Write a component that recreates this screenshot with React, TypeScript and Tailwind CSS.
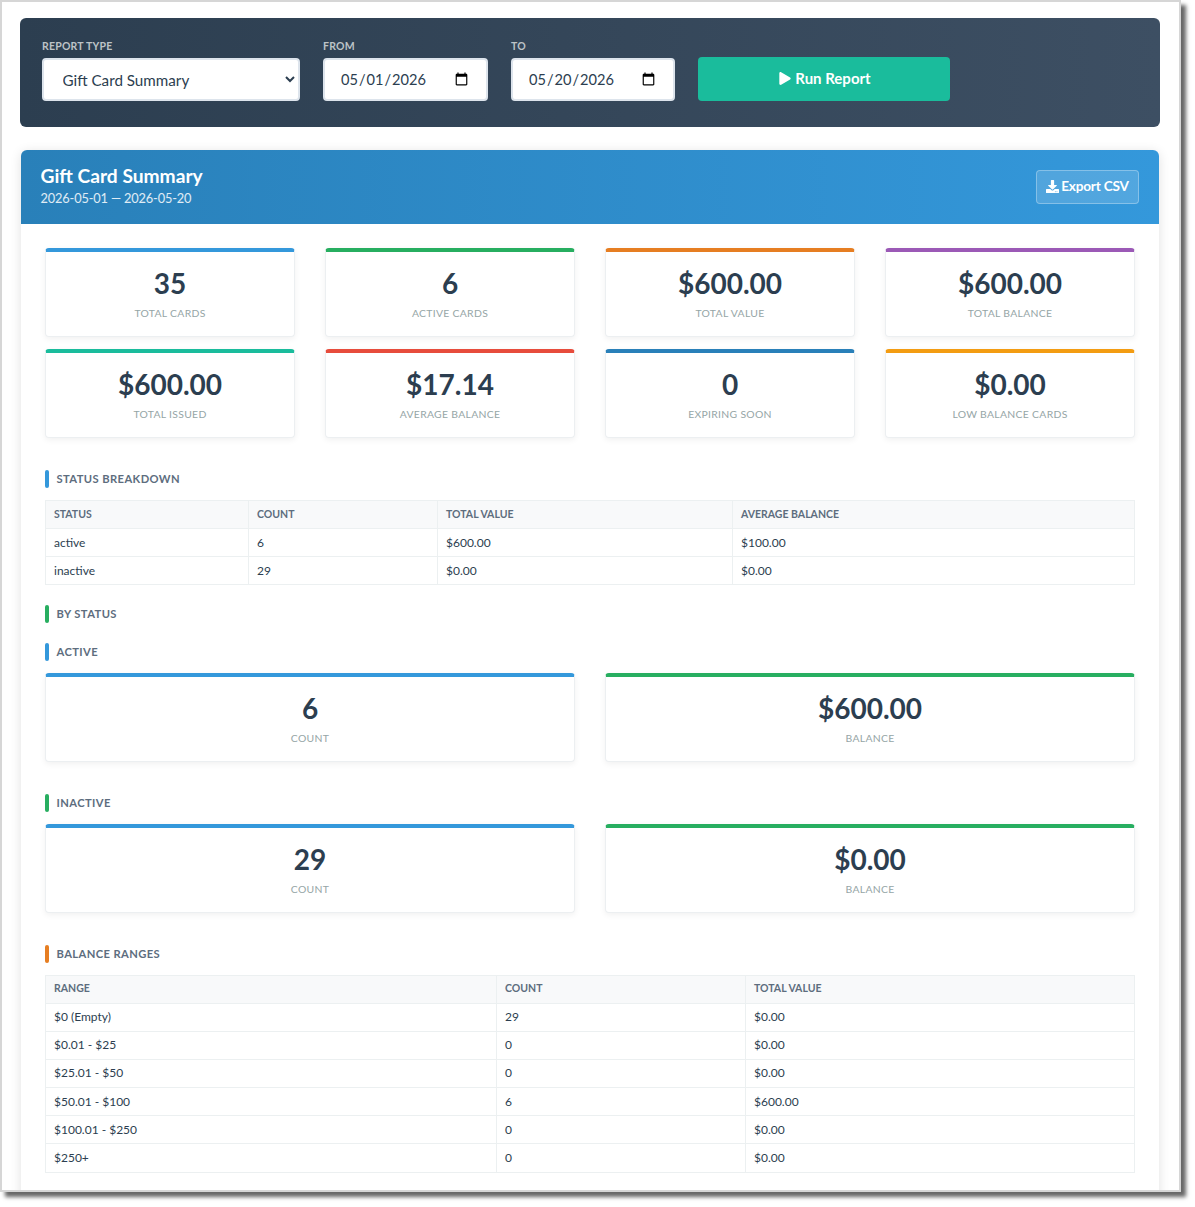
import { FaPlay, FaDownload } from "react-icons/fa";

function Stat({ value, label, color }: { value: string; label: string; color: string }) {
  return (
    <div className={`h-[89px] rounded-[4px] border border-[#eceff1] border-t-4 bg-white pt-[13px] text-center shadow-[0_2px_6px_rgba(0,0,0,0.06)] ${color}`}>
      <div className="text-[28px] font-bold leading-[36px] text-[#2c3e50]">{value}</div>
      <div className="mt-[5px] text-[10.4px] uppercase leading-[14px] tracking-[0.3px] text-[#95a5a6]">{label}</div>
    </div>
  );
}

function Title({ text, color, className }: { text: string; color: string; className: string }) {
  return (
    <div className={`flex h-[18px] items-center ${className}`}>
      <span className={`h-[18px] w-[4px] rounded-[2px] ${color}`} />
      <span className="ml-[7.5px] text-[11.2px] font-bold uppercase leading-[18px] tracking-[0.4px] text-[#5d6d7e]">{text}</span>
    </div>
  );
}

function DataTable({ widths, head, rows, rowH }: { widths: string[]; head: string[]; rows: string[][]; rowH: string }) {
  return (
    <table className="w-[1089px] table-fixed border-collapse text-[12px] text-[#2c3e50]">
      <colgroup>
        {widths.map((w) => (
          <col key={w} className={w} />
        ))}
      </colgroup>
      <thead>
        <tr className="bg-[#f8f9fa]">
          {head.map((h) => (
            <th key={h} className="h-[28px] border border-[#ecf0f1] pl-[8px] pr-[8px] text-left text-[10.5px] font-bold uppercase text-[#5d6d7e]">
              {h}
            </th>
          ))}
        </tr>
      </thead>
      <tbody>
        {rows.map((r) => (
          <tr key={r[0]} className={rowH}>
            {r.map((c, i) => (
              <td key={i} className="border border-[#ecf0f1] pl-[8px] pr-[8px]">
                {c}
              </td>
            ))}
          </tr>
        ))}
      </tbody>
    </table>
  );
}

const fieldClass =
  "h-[43px] rounded-[4px] border-2 border-[#dde4ec] bg-white text-[#2c3e50] outline-none";
const labelClass =
  "mb-[5px] text-[10.5px] font-bold uppercase leading-[14px] tracking-[0.2px] text-[#bdc3c7]";

export default function App() {
  return (
    <div className="h-[1207px] w-[1195px] bg-white font-['Lato',sans-serif]">
      <div className="h-[1192px] w-[1181px] border-2 border-[#d6d6d6] bg-white shadow-[5px_5px_4px_rgba(0,0,0,0.6)]">
        <div className="h-full overflow-hidden pl-[18px] pt-[16px] pr-[19px]">
          <div className="flex h-[109px] items-start gap-[23px] rounded-[6px] bg-gradient-to-r from-[#2c3e50] to-[#3d4f63] pl-[22px] pt-[21px]">
            <div className="w-[258px]">
              <div className={labelClass}>Report Type</div>
              <select className={`${fieldClass} w-full pl-[14.5px] text-[15.2px]`} defaultValue="Gift Card Summary">
                <option>Gift Card Summary</option>
              </select>
            </div>
            <div className="w-[165px]">
              <div className={labelClass}>From</div>
              <input type="date" defaultValue="2026-05-01" className={`${fieldClass} w-full pl-[15px] pr-[15px] text-[14.6px]`} />
            </div>
            <div className="w-[164px]">
              <div className={labelClass}>To</div>
              <input type="date" defaultValue="2026-05-20" className={`${fieldClass} w-full pl-[15px] pr-[15px] text-[14.6px]`} />
            </div>
            <button className="mt-[18px] flex h-[44px] w-[252px] items-center justify-center gap-[4px] rounded-[4px] bg-[#1abc9c] pb-[2px] pl-[2px] text-[15px] font-bold text-white">
              <FaPlay className="h-[13px] w-[12px]" />
              Run Report
            </button>
          </div>

          <div className="ml-[1px] mr-[1px] mt-[23px] h-[1100px] rounded-t-[6px] bg-white shadow-[0_2px_12px_rgba(0,0,0,0.12)]">
            <div className="flex h-[74px] items-center justify-between rounded-t-[6px] bg-gradient-to-r from-[#2980b9] to-[#3498db] pl-[19.5px] pr-[20px]">
              <div className="pb-[4px]">
                <div className="text-[19.2px] font-bold leading-[23px] text-white">Gift Card Summary</div>
                <div className="mt-[3px] text-[12.8px] leading-[17px] tracking-[-0.16px] text-white/85">2026-05-01 — 2026-05-20</div>
              </div>
              <button className="flex h-[34px] w-[103px] items-center justify-center gap-[2px] rounded-[4px] border border-white/30 bg-white/15 pb-[2px] text-[13.6px] font-bold tracking-[-0.2px] text-white">
                <FaDownload className="h-[13px] w-[13px]" />
                Export CSV
              </button>
            </div>

            <div className="px-[24px] pt-[24px]">
              <div className="grid grid-cols-4 gap-x-[30px] gap-y-[12px]">
                <Stat value="35" label="Total Cards" color="border-t-[#3498db]" />
                <Stat value="6" label="Active Cards" color="border-t-[#27ae60]" />
                <Stat value="$600.00" label="Total Value" color="border-t-[#e67e22]" />
                <Stat value="$600.00" label="Total Balance" color="border-t-[#9b59b6]" />
                <Stat value="$600.00" label="Total Issued" color="border-t-[#1abc9c]" />
                <Stat value="$17.14" label="Average Balance" color="border-t-[#e74c3c]" />
                <Stat value="0" label="Expiring Soon" color="border-t-[#2980b9]" />
                <Stat value="$0.00" label="Low Balance Cards" color="border-t-[#f39c12]" />
              </div>

              <Title text="Status Breakdown" color="bg-[#3498db]" className="mt-[32px] mb-[12px]" />
              <DataTable
                widths={["w-[203px]", "w-[189px]", "w-[295px]", "w-[402px]"]}
                head={["Status", "Count", "Total Value", "Average Balance"]}
                rowH="h-[28px]"
                rows={[
                  ["active", "6", "$600.00", "$100.00"],
                  ["inactive", "29", "$0.00", "$0.00"],
                ]}
              />

              <Title text="By Status" color="bg-[#27ae60]" className="mt-[20px] mb-[20px]" />
              <Title text="Active" color="bg-[#3498db]" className="mb-[12px]" />
              <div className="grid grid-cols-2 gap-x-[30px]">
                <Stat value="6" label="Count" color="border-t-[#3498db]" />
                <Stat value="$600.00" label="Balance" color="border-t-[#27ae60]" />
              </div>

              <Title text="Inactive" color="bg-[#27ae60]" className="mt-[32px] mb-[12px]" />
              <div className="grid grid-cols-2 gap-x-[30px]">
                <Stat value="29" label="Count" color="border-t-[#3498db]" />
                <Stat value="$0.00" label="Balance" color="border-t-[#27ae60]" />
              </div>

              <Title text="Balance Ranges" color="bg-[#e67e22]" className="mt-[32px] mb-[11.6px]" />
              <DataTable
                widths={["w-[451px]", "w-[249px]", "w-[389px]"]}
                head={["Range", "Count", "Total Value"]}
                rowH="h-[28.17px]"
                rows={[
                  ["$0 (Empty)", "29", "$0.00"],
                  ["$0.01 - $25", "0", "$0.00"],
                  ["$25.01 - $50", "0", "$0.00"],
                  ["$50.01 - $100", "6", "$600.00"],
                  ["$100.01 - $250", "0", "$0.00"],
                  ["$250+", "0", "$0.00"],
                ]}
              />
            </div>
          </div>
        </div>
      </div>
    </div>
  );
}
